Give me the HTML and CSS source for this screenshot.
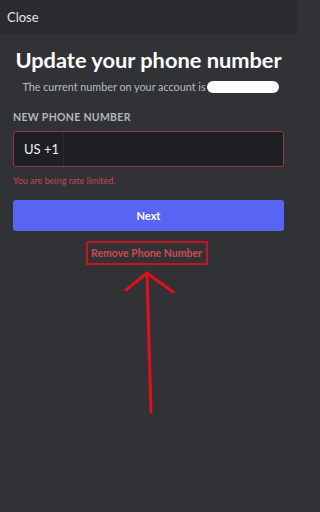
FILE: index.html
```html
<!DOCTYPE html>
<html>
<head>
<meta charset="utf-8">
<link rel="stylesheet" href="styles.css">
</head>
<body>
<div class="screen">
  <header class="topbar"><span class="close">Close</span></header>
  <main class="content">
    <h1 class="title">Update your phone number</h1>
    <p class="subtitle">The current number on your account is<span class="redact"></span></p>
    <label class="label">NEW PHONE NUMBER</label>
    <div class="input">
      <div class="prefix">US +1</div>
      <div class="field"></div>
    </div>
    <p class="error">You are being rate limited.</p>
    <button class="next">Next</button>
    <div class="remove-row">
      <span class="remove">Remove Phone Number</span>
    </div>
  </main>
  <svg class="arrow" width="297" height="512" viewBox="0 0 297 512">
    <path d="M151 412 L147 274" stroke="#e0101a" stroke-width="3" fill="none" stroke-linecap="round"/>
    <path d="M126 290 L147 273 L173 292" stroke="#e0101a" stroke-width="3" fill="none" stroke-linecap="round" stroke-linejoin="round"/>
  </svg>
</div>
</body>
</html>
```
FILE: styles.css
```css
* { box-sizing: border-box; }
html, body { margin: 0; padding: 0; background: #313236; }
body {
  font-family: "Lato", "Open Sans", sans-serif;
  color: #fff;
}
.screen {
  position: relative;
  width: 297px;
  height: 512px;
  overflow: hidden;
  background: #313236;
}
.topbar {
  height: 34px;
  background: #2a2b2f;
  display: flex;
  align-items: center;
  padding-left: 7px;
}
.close {
  font-size: 13px;
  color: #e4e5e8;
}
.content {
  padding: 0 13px;
  display: flex;
  flex-direction: column;
}
.title {
  margin: 12px 0 0;
  text-align: center;
  font-size: 21.8px;
  font-weight: 700;
  line-height: 28px;
  white-space: nowrap;
  color: #fff;
}
.subtitle {
  margin: 5px 0 0;
  font-size: 10.8px;
  line-height: 15px;
  color: #b8bac0;
  display: flex;
  justify-content: center;
  align-items: center;
  white-space: nowrap;
  padding-left: 4px;
}
.redact {
  display: inline-block;
  width: 72px;
  height: 12px;
  border-radius: 6px;
  background: #fdfdfd;
  margin-left: 1px;
}
.label {
  margin-top: 17px;
  font-size: 10.5px;
  font-weight: 700;
  color: #b5b7bd;
  line-height: 13px;
  letter-spacing: 0.3px;
}
.input {
  margin-top: 7px;
  height: 36px;
  border: 1px solid #9b3844;
  border-radius: 3px;
  background: #1e1f22;
  display: flex;
}
.prefix {
  width: 50px;
  border-right: 1px solid #2a2b2f;
  display: flex;
  align-items: center;
  padding-left: 10px;
  font-size: 13px;
  color: #f2f3f5;
}
.field { flex: 1; }
.error {
  margin: 8px 0 0;
  font-size: 9px;
  line-height: 12px;
  color: #c44652;
}
.next {
  margin-top: 13px;
  height: 31px;
  border: none;
  border-radius: 3px;
  background: #5865f2;
  color: #fff;
  font-family: inherit;
  font-size: 11px;
  font-weight: 700;
}
.remove-row {
  margin-top: 10px;
  display: flex;
  justify-content: center;
}
.remove {
  border: 2px solid #c8141e;
  width: 122px;
  height: 24px;
  display: flex;
  align-items: center;
  justify-content: center;
  font-size: 10.5px;
  font-weight: 700;
  white-space: nowrap;
  color: #cc4a55;
  margin-right: 4px;
}
.arrow {
  position: absolute;
  left: 0;
  top: 0;
  pointer-events: none;
}
```
